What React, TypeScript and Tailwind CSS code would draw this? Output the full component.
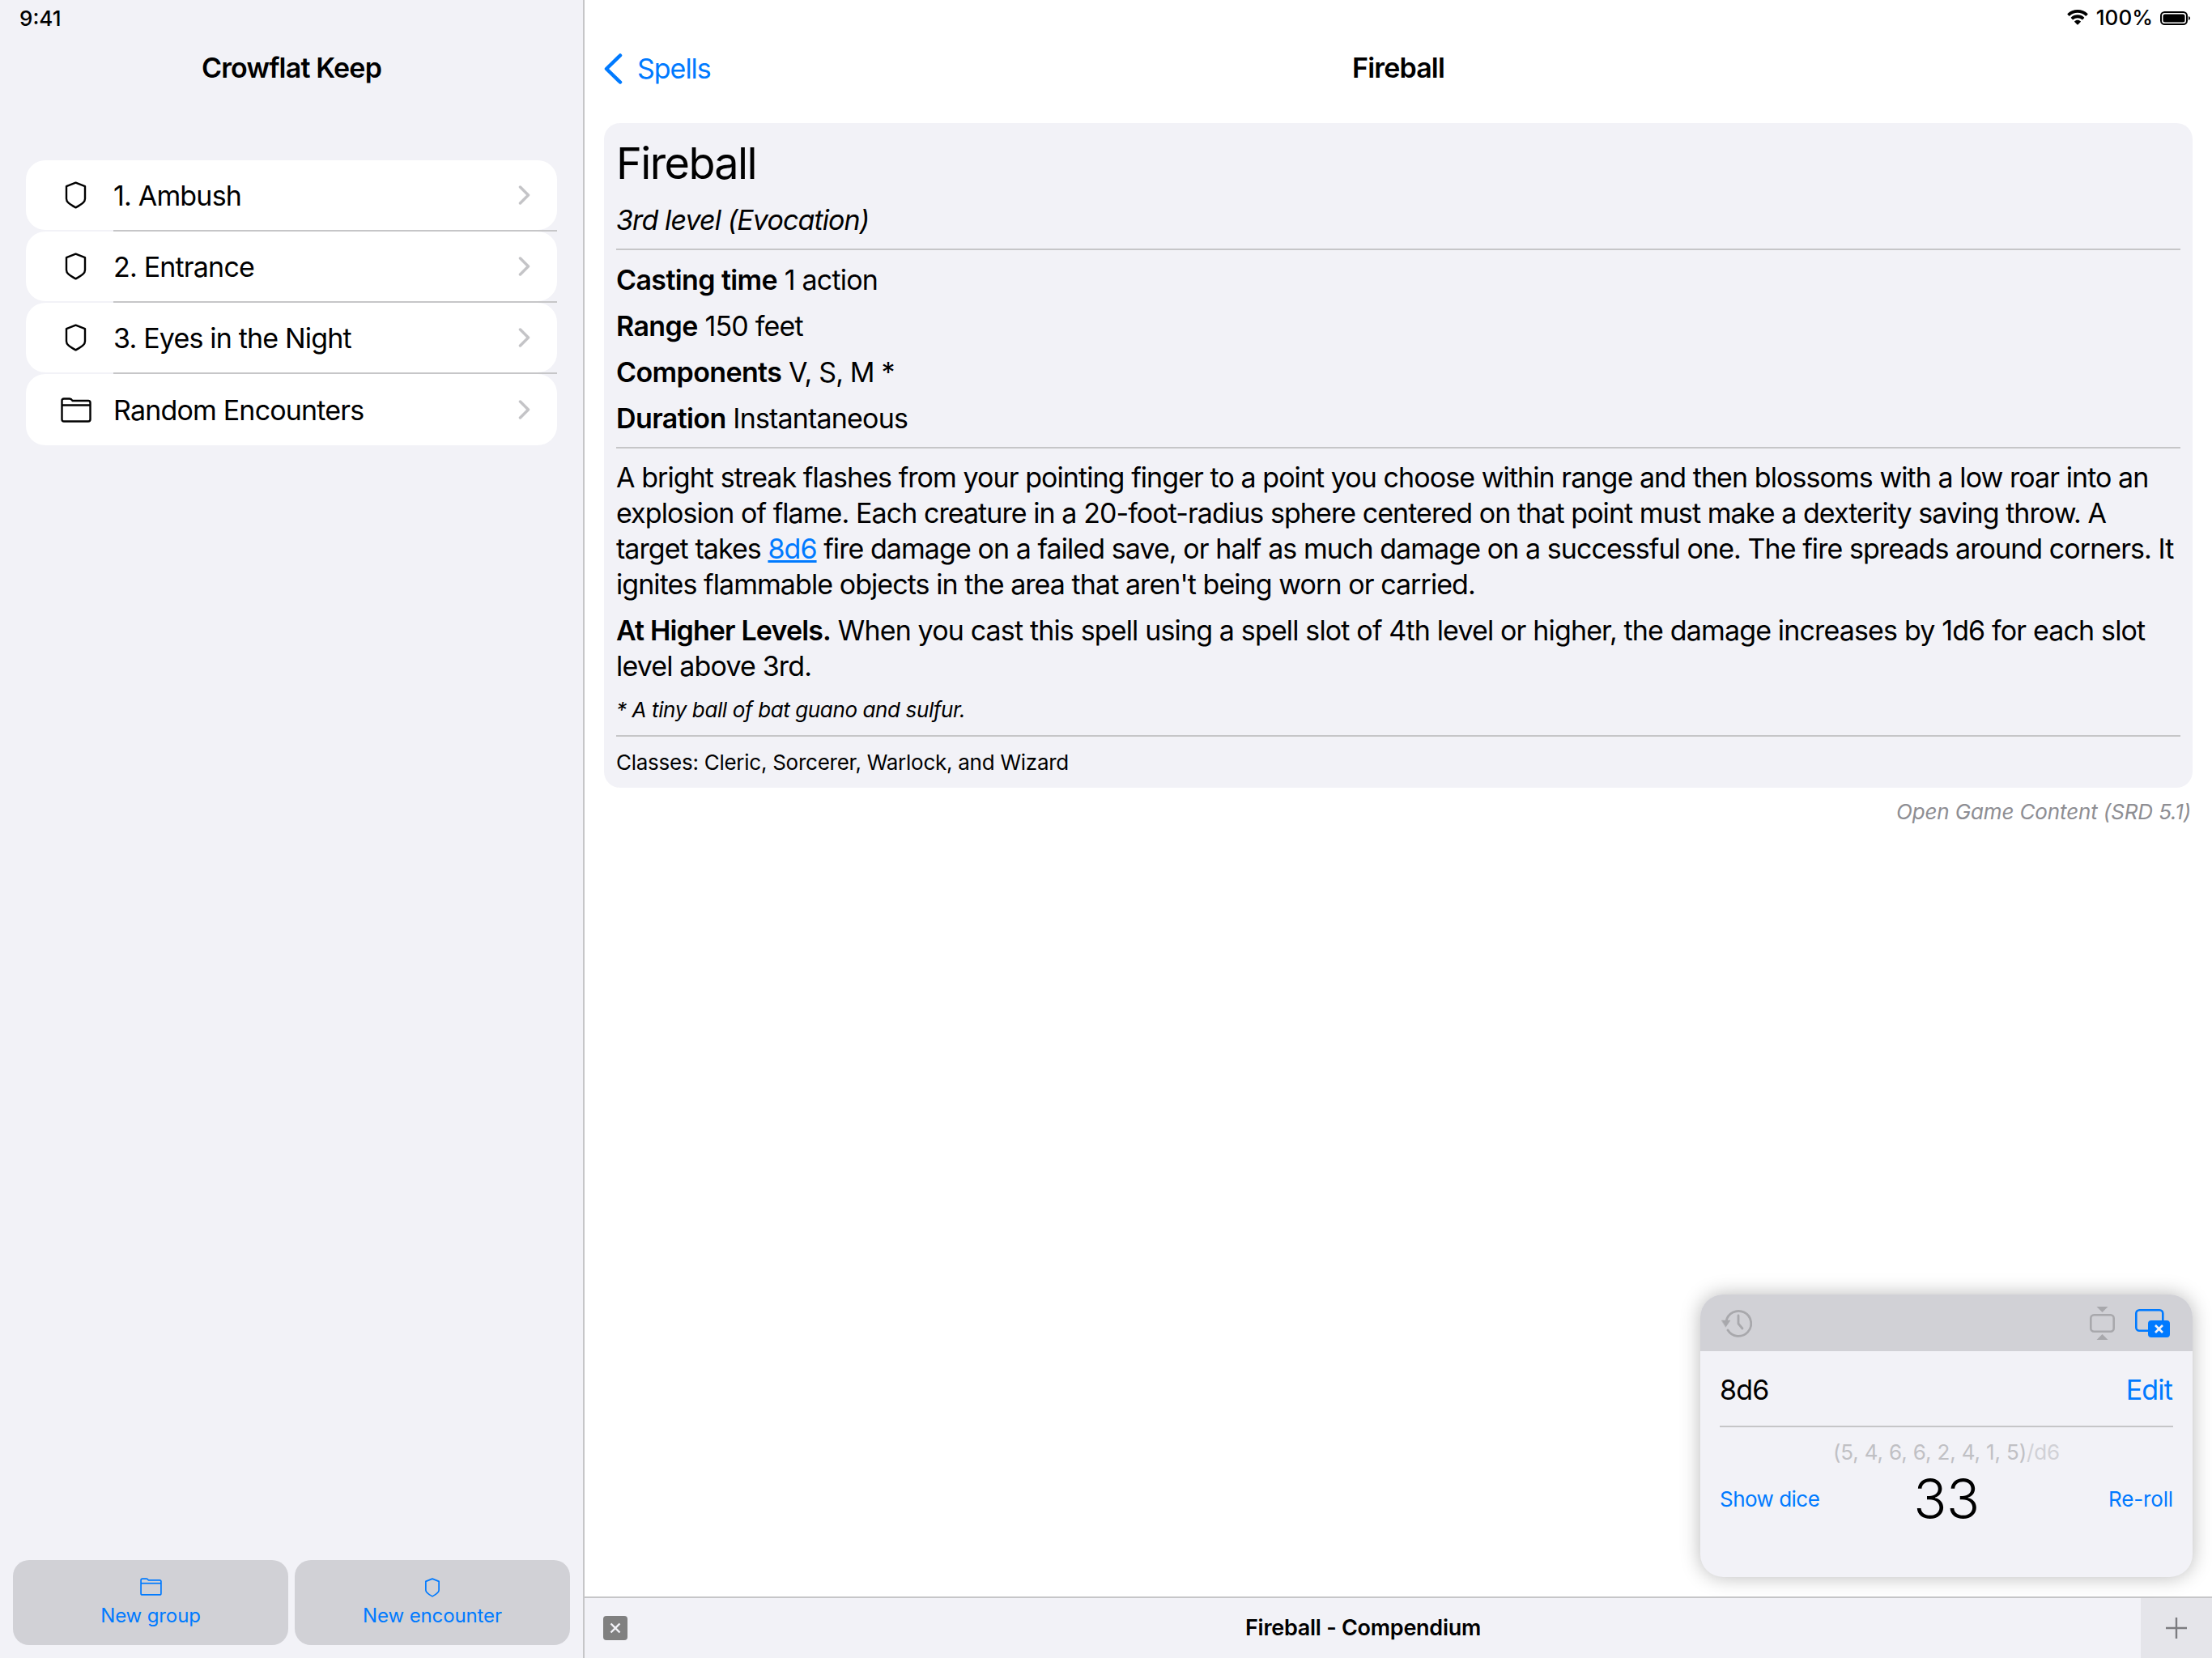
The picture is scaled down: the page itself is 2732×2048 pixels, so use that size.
import { ReactNode } from 'react';

const font = "font-['Inter','Liberation_Sans',sans-serif]";

function ShieldIcon({ className }: { className?: string }) {
  return (
    <svg viewBox="0 0 27 34" className={className} fill="none" stroke="currentColor" strokeWidth="2.4" strokeLinejoin="round">
      <path d="M13.5 1.6 L25 6.2 V21.5 C25 25 22.5 27.5 13.5 32.4 C4.5 27.5 2 25 2 21.5 V6.2 Z" />
    </svg>
  );
}

function FolderIcon({ className }: { className?: string }) {
  return (
    <svg viewBox="0 0 38 31" className={className} fill="none" stroke="currentColor" strokeWidth="2.4" strokeLinejoin="round">
      <path d="M1.5 9.5 V4 C1.5 2.5 2.5 1.5 4 1.5 H11 C12.5 1.5 13.5 2.3 14.5 4 H34 C35.5 4 36.5 5 36.5 6.5 V27 C36.5 28.5 35.5 29.5 34 29.5 H4 C2.5 29.5 1.5 28.5 1.5 27 Z" />
      <path d="M1.5 9.5 H36.5" />
    </svg>
  );
}

function Chevron() {
  return (
    <svg viewBox="0 0 15 24" className="h-[24px] w-[15px] text-[#c4c4c7]" fill="none" stroke="currentColor" strokeWidth="3.5" strokeLinecap="round" strokeLinejoin="round">
      <path d="M2.5 2 L12.5 12 L2.5 22" />
    </svg>
  );
}

function NavRow({ icon, label, last }: { icon: ReactNode; label: string; last?: boolean }) {
  return (
    <div>
      <div className={`flex items-center rounded-[24px] bg-white pr-[33px] ${last ? 'h-[88px]' : 'h-[86px]'}`}>
        <div className="flex w-[108px] shrink-0 justify-center pl-[15px]">{icon}</div>
        <span className="flex-1 text-[34px] tracking-[-0.024em]">{label}</span>
        <Chevron />
      </div>
      {!last && <div className="ml-[108px] h-[2px] bg-[#c6c6c8]" />}
    </div>
  );
}

function SpellStat({ name, value }: { name: string; value: string }) {
  return (
    <p className="h-[57px] text-[34px] leading-[57px] tracking-[-0.024em]">
      <b className="font-semibold tracking-[-0.018em]">{name}</b> {value}
    </p>
  );
}

export default function App() {
  return (
    <div className={`relative flex h-[2048px] w-[2732px] overflow-hidden bg-white text-black ${font}`}>
      {/* Sidebar */}
      <aside className="flex w-[720px] shrink-0 flex-col bg-[#f2f2f7]">
        <div className="h-[44px] pl-[24px] pt-[9px] text-[26px] font-medium leading-[28px]">9:41</div>
        <h1 className="h-[80px] text-center text-[34px] font-semibold leading-[80px] tracking-[-0.024em]">Crowflat Keep</h1>
        <nav className="mx-[32px] mt-[74px] flex-1">
          <NavRow icon={<ShieldIcon className="h-[34px] w-[27px]" />} label="1. Ambush" />
          <NavRow icon={<ShieldIcon className="h-[34px] w-[27px]" />} label="2. Entrance" />
          <NavRow icon={<ShieldIcon className="h-[34px] w-[27px]" />} label="3. Eyes in the Night" />
          <NavRow icon={<FolderIcon className="h-[31px] w-[38px]" />} label="Random Encounters" last />
        </nav>
        <div className="mx-[16px] mb-[16px] flex h-[105px] gap-[8px]">
          <button className="flex flex-1 flex-col items-center rounded-[20px] bg-[#d1d1d6] pt-[22px] text-[#007aff]">
            <FolderIcon className="h-[22px] w-[27px]" />
            <span className="mt-[9px] text-[24px] leading-[32px] tracking-[-0.005em]">New group</span>
          </button>
          <button className="flex flex-1 flex-col items-center rounded-[20px] bg-[#d1d1d6] pt-[22px] text-[#007aff]">
            <ShieldIcon className="h-[24px] w-[20px]" />
            <span className="mt-[7px] text-[24px] leading-[32px] tracking-[-0.005em]">New encounter</span>
          </button>
        </div>
      </aside>

      {/* Detail */}
      <main className="flex min-w-0 flex-1 flex-col border-l-2 border-[#c6c6c8]">
        <div className="flex h-[44px] items-center justify-end gap-[9px] pr-[26px]">
          <svg viewBox="0 0 28 20" className="h-[20px] w-[28px]" fill="currentColor">
            <path d="M14 3.8c3.8 0 7.3 1.5 9.9 3.9.2.2.5.2.7 0l1.9-2c.2-.2.2-.6 0-.8C23.2 1.9 18.800 0 14 0S4.800 1.900 1.500 4.900c-.2.2-.2.6 0 .8l1.900 2c.2.200.5.200.7 0C6.700 5.300 10.200 3.800 14 3.800z" />
            <path d="M14 10.200c2.100 0 4 .8 5.500 2.100.2.200.5.200.7 0l1.900-2c.2-.2.2-.6 0-.8C20 7.500 17.100 6.300 14 6.300s-6 1.200-8.100 3.200c-.2.2-.2.6 0 .8l1.900 2c.2.200.5.200.7 0C10 11 11.900 10.200 14 10.200z" />
            <path d="M14 12.700c-1.500 0-2.800.6-3.800 1.500-.2.2-.2.5 0 .7l3.400 3.500c.2.200.6.200.8 0l3.400-3.500c.2-.2.2-.5 0-.7-1-.9-2.300-1.500-3.800-1.500z" />
          </svg>
          <span className="text-[26px] font-medium leading-[28px]">100%</span>
          <svg viewBox="0 0 38 17" className="h-[17px] w-[38px]">
            <rect x="1" y="1" width="32" height="15" rx="4.500" fill="none" stroke="black" strokeWidth="2" />
            <rect x="3.500" y="3.500" width="27" height="10" rx="2.500" fill="black" />
            <path d="M35 6v5c1.200-.4 2-1.400 2-2.500S36.200 6.400 35 6z" fill="black" />
          </svg>
        </div>

        <div className="relative flex h-[80px] items-center justify-center pb-[2px]">
          <span className="text-[34px] font-semibold tracking-[-0.024em]">Fireball</span>
          <div className="absolute left-[24px] top-[15px] flex items-center gap-[18px] text-[#007aff]">
            <svg viewBox="0 0 23 38" className="h-[38px] w-[23px]" fill="none" stroke="currentColor" strokeWidth="4.500" strokeLinecap="round" strokeLinejoin="round">
              <path d="M20 2.500 L3 19 L20 35.500" />
            </svg>
            <span className="text-[34px] tracking-[-0.03em]">Spells</span>
          </div>
        </div>

        <article className="mx-[24px] mt-[28px] rounded-[20px] bg-[#f2f2f7] px-[15px] pb-[14px] pt-[16px]">
          <h2 className="h-[68px] text-[54px] leading-[68px] tracking-[-0.03em]">Fireball</h2>
          <p className="mt-[16px] h-[40px] text-[34px] italic leading-[40px] tracking-[-0.026em]">3rd level (Evocation)</p>
          <hr className="mt-[15px] h-[2px] border-0 bg-[#c6c6c8]" />
          <div className="pt-[8px]">
            <SpellStat name="Casting time" value="1 action" />
            <SpellStat name="Range" value="150 feet" />
            <SpellStat name="Components" value="V, S, M *" />
            <SpellStat name="Duration" value="Instantaneous" />
          </div>
          <hr className="mt-[7px] h-[2px] border-0 bg-[#c6c6c8]" />
          <p className="mt-[14px] text-[34px] leading-[44px] tracking-[-0.0275em]">
            A bright streak flashes from your pointing finger to a point you choose within range and then blossoms with a low roar into an explosion of flame. Each creature in a 20-foot-radius sphere centered on that point must make a dexterity saving throw. A target takes <a className="text-[#007aff] underline">8d6</a> fire damage on a failed save, or half as much damage on a successful one. The fire spreads around corners. It ignites flammable objects in the area that aren't being worn or carried.
          </p>
          <p className="mt-[13px] text-[34px] leading-[44px] tracking-[-0.025em]">
            <b className="font-semibold">At Higher Levels.</b> When you cast this spell using a spell slot of 4th level or higher, the damage increases by 1d6 for each slot level above 3rd.
          </p>
          <p className="mt-[14px] h-[36px] text-[26px] italic leading-[36px] tracking-[-0.015em]">* A tiny ball of bat guano and sulfur.</p>
          <hr className="mt-[13px] h-[2px] border-0 bg-[#c6c6c8]" />
          <p className="mt-[15px] text-[26px] leading-[34px] tracking-[-0.01em]">Classes: Cleric, Sorcerer, Warlock, and Wizard</p>
        </article>
        <p className="mr-[26px] mt-[13px] text-right text-[26px] italic leading-[34px] tracking-[-0.005em] text-[#8e8e93]">Open Game Content (SRD 5.1)</p>

        <div className="mt-auto flex h-[76px] items-center border-t-2 border-[#c6c6c8] bg-[#f2f2f7]">
          <div className="ml-[23px] flex h-[30px] w-[30px] items-center justify-center rounded-[4px] bg-[#808080]">
            <svg viewBox="0 0 16 16" className="h-[16px] w-[16px]" fill="none" stroke="#f2f2f7" strokeWidth="2.400">
              <path d="M2.500 2.500 L13.500 13.500 M13.500 2.500 L2.500 13.500" />
            </svg>
          </div>
          <span className="flex-1 pr-[52px] text-center text-[27px] font-semibold tracking-[-0.01em]">Fireball - Compendium</span>
          <div className="flex h-full w-[88px] items-center justify-center bg-[#e5e5ea]">
            <svg viewBox="0 0 28 28" className="h-[28px] w-[28px]" fill="none" stroke="#7c7c80" strokeWidth="2.400">
              <path d="M14 1 V27 M1 14 H27" />
            </svg>
          </div>
        </div>
      </main>

      {/* Dice roller, floating over the detail pane */}
      <section className="absolute left-[2100px] top-[1599px] h-[349px] w-[608px] overflow-hidden rounded-[28px] bg-[#f2f2f7] shadow-[0_0_24px_rgba(0,0,0,0.28)]">
        <div className="flex h-[70px] items-center bg-[#d1d1d6] pl-[26px] pr-[28px]">
          <svg viewBox="0 0 38 36" className="h-[36px] w-[38px]" fill="none" stroke="#a8a8ac" strokeWidth="2.800" strokeLinecap="round" strokeLinejoin="round">
            <path d="M6 16 A15.500 15.500 0 1 1 8 27" />
            <path d="M21 9 V19 L26 25" />
            <path d="M0.500 15 H11 L5.500 23 Z" fill="#a8a8ac" strokeWidth="0.500" />
          </svg>
          <svg viewBox="0 0 31 41" className="ml-auto h-[41px] w-[31px]" fill="none">
            <path d="M8.500 0 H22.500 L15.500 7 Z" fill="#a8a8ac" />
            <rect x="1.300" y="10.300" width="28.400" height="20.400" rx="4" stroke="#a8a8ac" strokeWidth="2.600" />
            <path d="M8.500 41 H22.500 L15.500 34 Z" fill="#a8a8ac" />
          </svg>
          <svg viewBox="0 0 43 35" className="ml-[25px] h-[35px] w-[43px]" fill="none">
            <rect x="1.300" y="1.300" width="33" height="25.400" rx="4" stroke="#007aff" strokeWidth="2.600" />
            <rect x="16" y="14" width="27" height="21" rx="4" fill="#007aff" />
            <path d="M25 20 L34 29 M34 20 L25 29" stroke="#f2f2f7" strokeWidth="2.600" />
          </svg>
        </div>
        <div className="mx-[24px] flex h-[94px] items-center justify-between border-b-2 border-[#c6c6c8] pl-0 pr-[1px] pt-[2px] text-[34px] tracking-[-0.024em]">
          <span>8d6</span>
          <span className="text-[#007aff]">Edit</span>
        </div>
        <p className="mt-[15px] text-center text-[26px] leading-[32px] tracking-[-0.005em] text-[#c0c0c4]">
          (5, 4, 6, 6, 2, 4, 1, 5)<span className="text-[#d1d1d6]">/d6</span>
        </p>
        <div className="mx-[24px] grid grid-cols-[1fr_auto_1fr] items-center text-[26px] tracking-[-0.02em] text-[#007aff]">
          <span>Show dice</span>
          <span className="text-[68px] font-light leading-[82px] text-black">33</span>
          <span className="text-right tracking-[-0.006em]">Re-roll</span>
        </div>
      </section>
    </div>
  );
}
